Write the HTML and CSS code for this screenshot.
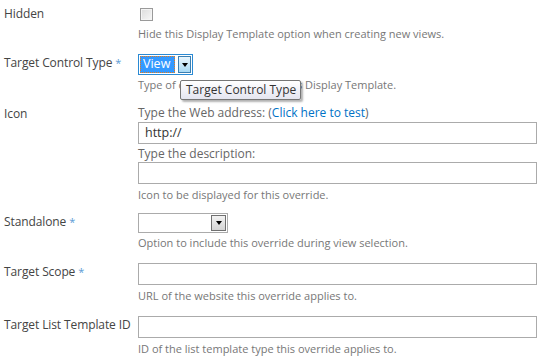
FILE: index.html
```html
<!DOCTYPE html>
<html>
    <head>
        <meta charset="UTF-8">
        <title>Display Template Settings</title>
        <link rel="stylesheet" href="styles.css">
    </head>
    <body>
        <div class="form">
            <!--Hidden-->
            <div class="row first">
                <div class="label">Hidden</div>
                <div class="field">
                    <span class="check"></span>
                    <div class="desc">Hide this Display Template option when creating new views.</div>
                </div>
            </div>
            <!--Target Control Type-->
            <div class="row">
                <div class="label">Target Control Type <span class="req">*</span></div>
                <div class="field">
                    <div class="select focused">
                        <span class="value"><span class="sel">View</span></span>
                        <span class="arrow"><i></i></span>
                        <div class="tip">Target Control Type</div>
                    </div>
                    <div class="desc">Type of control rendered by this Display Template.</div>
                </div>
            </div>
            <!--Icon-->
            <div class="row">
                <div class="label">Icon</div>
                <div class="field">
                    <div class="sub">Type the Web address: (<a href="#">Click here to test</a>)</div>
                    <div class="input">http://</div>
                    <div class="sub second">Type the description:</div>
                    <div class="input"></div>
                    <div class="desc">Icon to be displayed for this override.</div>
                </div>
            </div>
            <!--Standalone-->
            <div class="row tight">
                <div class="label">Standalone <span class="req">*</span></div>
                <div class="field">
                    <div class="select plain">
                        <span class="value"></span>
                        <span class="arrow"><i></i></span>
                    </div>
                    <div class="desc">Option to include this override during view selection.</div>
                </div>
            </div>
            <!--Target Scope-->
            <div class="row">
                <div class="label">Target Scope <span class="req">*</span></div>
                <div class="field">
                    <div class="input"></div>
                    <div class="desc">URL of the website this override applies to.</div>
                </div>
            </div>
            <!--Target List Template ID-->
            <div class="row">
                <div class="label">Target List Template ID</div>
                <div class="field">
                    <div class="input"></div>
                    <div class="desc">ID of the list template type this override applies to.</div>
                </div>
            </div>
        </div>
    </body>
</html>
```

FILE: styles.css
```css
body{
    margin: 0;
    background: #fff;
    font-family: 'Open Sans', 'Noto Sans', sans-serif;
    color: #444;
}
.form{
    padding: 0 0 0 4px;
}
.row{
    display: grid;
    grid-template-columns: 134px 399px;
    margin-top: 12px;
}
.row.first{
    margin-top: 5px;
}
.row.tight{
    margin-top: 10px;
}
.label{
    font-size: 12px;
    line-height: 18px;
    letter-spacing: -0.1px;
    white-space: nowrap;
}
.req{
    color: #5b9bd5;
    font-size: 11px;
}
.field{
    position: relative;
}
.desc{
    font-size: 11px;
    line-height: 16px;
    color: #777;
    margin-top: 2px;
    white-space: nowrap;
}
.check + .desc{
    margin-top: 5px;
}
.input + .desc{
    margin-top: 3px;
}
.sub{
    font-size: 12px;
    line-height: 16px;
    color: #666;
    white-space: nowrap;
}
.sub.second{
    margin-top: 2px;
    line-height: 15px;
}
.sub a{
    color: #0072c6;
    text-decoration: none;
}
.check{
    display: block;
    width: 11px;
    height: 11px;
    margin: 3px 0 0 2px;
    border: 1px solid #9a9a9a;
    background: linear-gradient(135deg, #dcdcdc, #f7f7f7);
    box-shadow: inset 0 0 0 1px #f4f4f4;
}
.input{
    box-sizing: border-box;
    height: 22px;
    width: 399px;
    border: 1px solid #ababab;
    font-size: 12.5px;
    line-height: 20px;
    padding: 0 6px;
    color: #333;
}
.row .sub + .input{
    margin-top: 1px;
}
.select{
    position: relative;
    box-sizing: border-box;
    display: flex;
    height: 21px;
}
.select .value{
    flex: 1;
}
.select .arrow{
    display: flex;
    align-items: center;
    justify-content: center;
}
.select .arrow i{
    width: 0;
    height: 0;
    border-left: 3.5px solid transparent;
    border-right: 3.5px solid transparent;
    border-top: 4px solid #000;
}
.select.focused{
    width: 55px;
    border: 1px solid #2a8ad4;
    padding: 1px;
    background: #fff;
}
.select.focused .value{
    display: flex;
}
.select.focused .sel{
    flex: 1;
    background: #3399ff;
    color: #fff;
    font-size: 12.5px;
    line-height: 15px;
    padding-left: 3px;
    outline: 1px dotted #e07a1f;
    outline-offset: -1px;
}
.select.focused .arrow{
    width: 13px;
    margin-left: 3px;
    background: linear-gradient(#eaf6fd, #a7d9f5);
    border: 1px solid #3c7fb1;
    box-sizing: border-box;
}
.select.plain{
    width: 90px;
    height: 20px;
    border: 1px solid #ababab;
}
.select.plain .arrow{
    width: 15px;
    margin: 1px;
    box-sizing: border-box;
    border: 1px solid #707070;
    background: linear-gradient(#f2f2f2, #d4d4d4);
}
.tip{
    position: absolute;
    left: 41px;
    top: 25px;
    padding: 0 4px 0 5px;
    height: 18px;
    line-height: 18px;
    font-size: 12px;
    color: #333;
    white-space: nowrap;
    background: linear-gradient(#ffffff, #e4e5f0);
    border: 1px solid #767676;
    border-radius: 2px;
    box-shadow: 2px 2px 2px rgba(0,0,0,0.3);
    z-index: 2;
}
```
